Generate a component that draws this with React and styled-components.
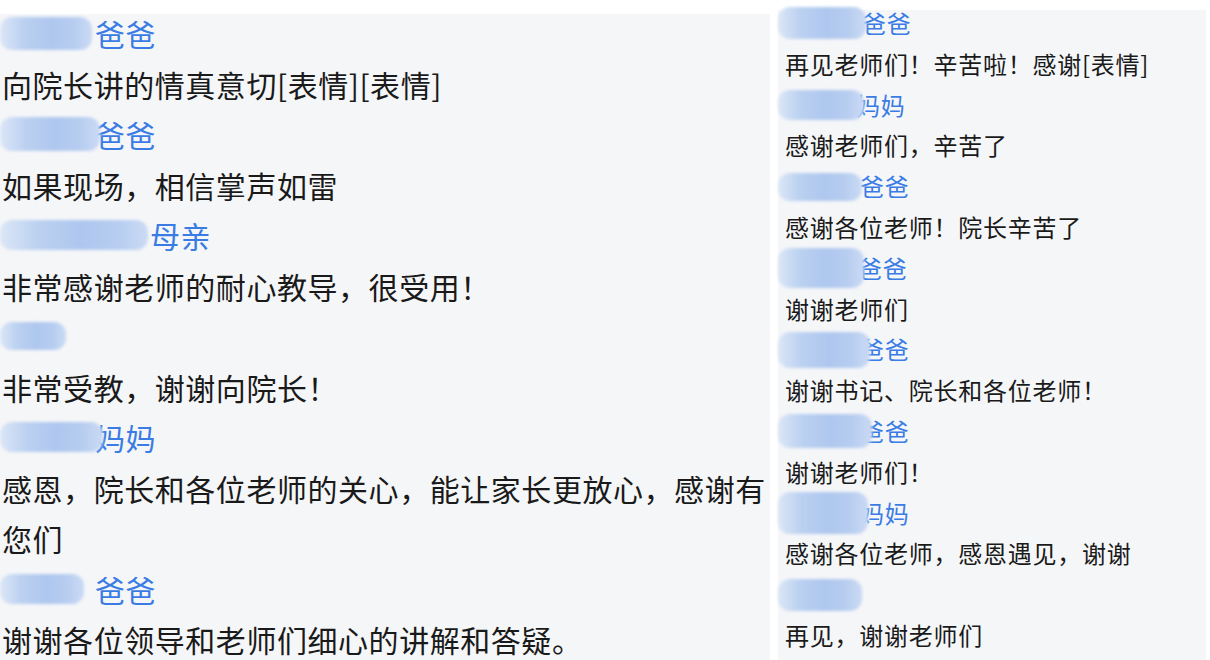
import styled, { createGlobalStyle } from "styled-components"

const Global = createGlobalStyle`
  html, body {
    margin: 0;
    padding: 0;
    background: #ffffff;
  }
  body {
    font-family: "Noto Sans CJK SC", "Noto Sans", sans-serif;
    color: #1a1a1a;
  }
`

const Page = styled.div`
  width: 1210px;
  height: 660px;
  overflow: hidden;
  display: flex;
  align-items: flex-start;
  gap: 8px;
`

const Panel = styled.div`
  background: #f5f6f8;
  margin-top: ${p => p.$top}px;
  width: ${p => p.$width}px;
  height: ${p => 660 - p.$top}px;
  padding-left: ${p => p.$pad}px;
  box-sizing: border-box;
  flex-shrink: 0;
`

const List = styled.div`
  margin-top: ${p => p.$shift}px;
  font-size: ${p => p.$size}px;
  line-height: ${p => p.$line}px;
  letter-spacing: ${p => p.$track}px;
`

const Row = styled.div`
  display: flex;
  align-items: center;
  height: ${p => p.$line}px;
`

const Mask = styled.span`
  display: inline-block;
  position: relative;
  z-index: 1;
  width: ${p => p.$w}px;
  height: ${p => p.$h}px;
  margin-left: ${p => -p.$pad}px;
  margin-right: ${p => p.$gap}px;
  border-radius: 12px;
  background: linear-gradient(90deg, #dbe6f6 0%, #bcd1f1 25%, #aec7ee 55%, #b7cdf0 80%, #cadaf4 100%);
  filter: blur(1.6px);
`

const Name = styled.span`
  color: #3a7be4;
`

const Msg = styled.div`
  color: #1a1a1a;
`

const left = [
  { name: "爸爸", w: 92, h: 33, gap: 3, msg: "向院长讲的情真意切[表情][表情]" },
  { name: "爸爸", w: 100, h: 34, gap: -5, msg: "如果现场，相信掌声如雷" },
  { name: "母亲", w: 148, h: 30, gap: 2, msg: "非常感谢老师的耐心教导，很受用！" },
  { name: "", w: 66, h: 28, gap: 0, msg: "非常受教，谢谢向院长！" },
  { name: "妈妈", w: 103, h: 30, gap: -8, msg: "感恩，院长和各位老师的关心，能让家长更放心，感谢有您们" },
  { name: "爸爸", w: 84, h: 30, gap: 11, msg: "谢谢各位领导和老师们细心的讲解和答疑。" },
]

const right = [
  { name: "爸爸", w: 88, h: 32, gap: -4, msg: "再见老师们！辛苦啦！感谢[表情]" },
  { name: "妈妈", w: 86, h: 30, gap: -8, msg: "感谢老师们，辛苦了" },
  { name: "爸爸", w: 84, h: 28, gap: -2, msg: "感谢各位老师！院长辛苦了" },
  { name: "爸爸", w: 86, h: 40, gap: -6, msg: "谢谢老师们" },
  { name: "爸爸", w: 92, h: 36, gap: -10, msg: "谢谢书记、院长和各位老师！" },
  { name: "爸爸", w: 94, h: 34, gap: -12, msg: "谢谢老师们！" },
  { name: "妈妈", w: 90, h: 42, gap: -8, msg: "感谢各位老师，感恩遇见，谢谢" },
  { name: "", w: 84, h: 32, gap: 0, msg: "再见，谢谢老师们" },
]

function Feed({ items, size, line, shift, track, maskPad }) {
  return (
    <List $size={size} $line={line} $shift={shift} $track={track}>
      {items.map((it, i) => (
        <div key={i}>
          <Row $line={line}>
            <Mask $w={it.w} $h={it.h} $gap={it.gap} $pad={maskPad} />
            {it.name && <Name>{it.name}</Name>}
          </Row>
          <Msg>{it.msg}</Msg>
        </div>
      ))}
    </List>
  )
}

export default function App() {
  return (
    <>
      <Global />
      <Page>
        <Panel $top={14} $width={770} $pad={2}>
          <Feed items={left} size={30} line={50.5} shift={-6} track={0.55} maskPad={2} />
        </Panel>
        <Panel $top={10} $width={428} $pad={7}>
          <Feed items={right} size={24} line={40.8} shift={-7} track={0.75} maskPad={7} />
        </Panel>
      </Page>
    </>
  )
}
